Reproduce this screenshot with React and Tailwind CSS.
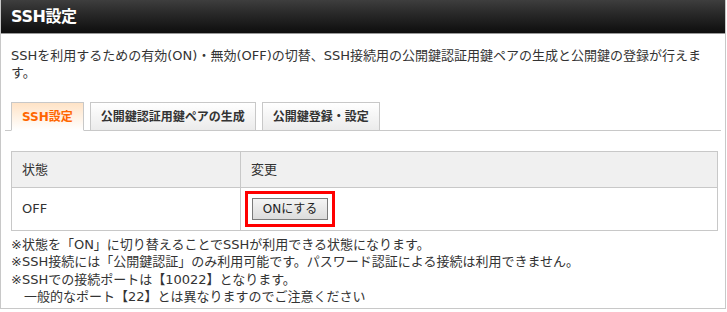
import React from 'react';

const tabs = [
  { label: 'SSH設定', active: true },
  { label: '公開鍵認証用鍵ペアの生成', active: false },
  { label: '公開鍵登録・設定', active: false },
];

const notes = [
  '※状態を「ON」に切り替えることでSSHが利用できる状態になります。',
  '※SSH接続には「公開鍵認証」のみ利用可能です。パスワード認証による接続は利用できません。',
  '※SSHでの接続ポートは【10022】となります。',
  '　一般的なポート【22】とは異なりますのでご注意ください',
];

const App = () => {
  return (
    <div className="w-[727px] h-[312px] bg-white text-[#333] font-['DejaVu_Sans','Noto_Sans_CJK_JP',sans-serif]">
      <div className="w-[726px] border-x border-b border-[#c8c8c8]">
        {/* title bar */}
        <div className="h-[34px] flex items-center pl-[10px] bg-gradient-to-b from-[#3e3e3e] to-[#0e0e0e] border-b border-[#999]">
          <h1 className="text-white font-bold text-[16px] tracking-tight">SSH設定</h1>
        </div>

        <div className="pt-[13px] pb-[3px]">
          <p className="px-[10px] text-[13px] leading-[17px]">
            SSHを利用するための有効(ON)・無効(OFF)の切替、SSH接続用の公開鍵認証用鍵ペアの生成と公開鍵の登録が行えます。
          </p>

          {/* tabs */}
          <div className="mt-[21px] mx-[4px] pl-[6px] flex gap-[6px] border-b border-[#c8c8c8]">
            {tabs.map(tab => (
              <div
                key={tab.label}
                className={`h-[29px] -mb-px px-[10px] flex items-center border border-[#c8c8c8] text-[12px] font-bold ${
                  tab.active
                    ? 'border-b-white bg-gradient-to-b from-[#ffe3c6] to-white text-[#ff6600]'
                    : 'bg-gradient-to-b from-white to-[#ebebeb] text-[#333]'
                }`}
              >
                {tab.label}
              </div>
            ))}
          </div>

          {/* table */}
          <table className="mt-[20px] mx-[10px] w-[707px] border-collapse text-[13px]">
            <thead>
              <tr className="bg-[#f0f0f0]">
                <th className="w-[229px] h-[36px] px-[10px] text-left font-normal border border-[#c8c8c8]">状態</th>
                <th className="h-[36px] px-[10px] text-left font-normal border border-[#c8c8c8]">変更</th>
              </tr>
            </thead>
            <tbody>
              <tr>
                <td className="h-[43px] px-[10px] border border-[#c8c8c8]">OFF</td>
                <td className="h-[43px] pl-[11px] border border-[#c8c8c8]">
                  <span className="relative inline-block align-middle">
                    <button className="h-[22px] w-[76px] flex items-center justify-center text-[12px] text-[#222] border border-[#7a7a7a] bg-gradient-to-b from-[#f4f4f4] to-[#dcdcdc]">
                      ONにする
                    </button>
                    <span className="absolute -inset-[7px] border-[3px] border-[#ff0000] pointer-events-none" />
                  </span>
                </td>
              </tr>
            </tbody>
          </table>

          {/* notes */}
          <div className="mt-[5px] px-[10px] text-[13px] leading-[17.3px]">
            {notes.map(n => (
              <p key={n}>{n}</p>
            ))}
          </div>
        </div>
      </div>
    </div>
  );
};

export default App;
